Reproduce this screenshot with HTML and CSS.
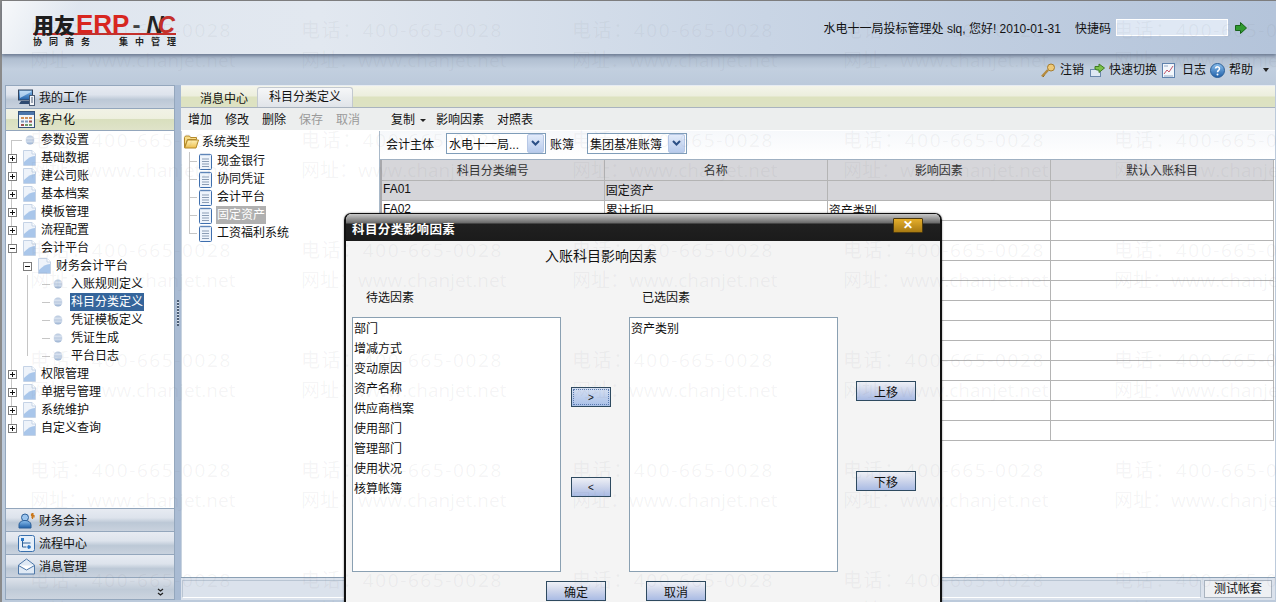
FILE: index.html
```html
<!DOCTYPE html>
<html lang="zh-CN">
<head>
  <meta charset="UTF-8">
  <title>用友ERP-NC</title>
  <link rel="stylesheet" href="styles.css">
</head>
<body>
  <!-- 图标 -->
  <svg class="sprite" xmlns="http://www.w3.org/2000/svg">
    <defs>
      <linearGradient id="g-ball" x1="0" y1="0" x2="0" y2="1"><stop offset="0" stop-color="#b4c5dd"/><stop offset=".5" stop-color="#e9eff7"/><stop offset="1" stop-color="#93acce"/></linearGradient>
      <linearGradient id="g-blue" x1="0" y1="0" x2="0" y2="1"><stop offset="0" stop-color="#8cc0ee"/><stop offset="1" stop-color="#1f5fa8"/></linearGradient>
      <linearGradient id="g-folder" x1="0" y1="0" x2="0" y2="1"><stop offset="0" stop-color="#fff3b8"/><stop offset="1" stop-color="#eebf4e"/></linearGradient>
    </defs>
    <symbol id="i-plus" viewBox="0 0 9 9"><rect x=".5" y=".5" width="8" height="8" fill="#fff" stroke="#7d7d7d"/><path d="M2 4.500h5M4.500 2v5" stroke="#111"/></symbol>
    <symbol id="i-minus" viewBox="0 0 9 9"><rect x=".5" y=".5" width="8" height="8" fill="#fff" stroke="#7d7d7d"/><path d="M2 4.500h5" stroke="#111"/></symbol>
    <symbol id="i-page" viewBox="0 0 13 16"><path d="M.5.500H9L12.500 4v11.500H.5z" fill="#eef3fa" stroke="#c5d3e6"/><path d="M1 15V12C5 8 8 6 12 6v9z" fill="#a9c6ea"/><path d="M9 .5V4h3.500" fill="#fff" stroke="#c5d3e6"/></symbol>
    <symbol id="i-ball" viewBox="0 0 10 10"><circle cx="5" cy="5" r="4.500" fill="url(#g-ball)"/><path d="M1 5h8" stroke="#7f9cc2" stroke-width=".6"/></symbol>
    <symbol id="i-folder" viewBox="0 0 15 14"><path d="M.5 12.500V2.500l1-1.500h4l1 1.500h6v2h-9z" fill="#f8dc87" stroke="#b58a2a"/><path d="M.7 13 3.500 5h11l-2.500 8z" fill="url(#g-folder)" stroke="#b58a2a"/></symbol>
    <symbol id="i-note" viewBox="0 0 13 17"><rect x=".5" y="1.500" width="12" height="15" rx="1" fill="#eef4fc" stroke="#3f6fae"/><path d="M1.500 1.500h10" stroke="#7f9cc2" stroke-width="2" stroke-dasharray="1 1"/><path d="M3 6h7M3 8.500h7M3 11h7M3 13.500h7" stroke="#8b9db5"/></symbol>
    <symbol id="i-monitor" viewBox="0 0 17 17"><rect x=".5" y="1" width="14" height="10" fill="url(#g-blue)" stroke="#33445e"/><path d="M2 9 13 3v-1H2z" fill="#d6e9fb" opacity=".7"/><path d="M3 12h9l2 3H1z" fill="#2e4a70"/><rect x="11.500" y="6.500" width="5" height="10" fill="#f4f6f9" stroke="#4c5d76"/><path d="M13 9h2M13 11h2M13 13h2" stroke="#4c5d76"/></symbol>
    <symbol id="i-grid" viewBox="0 0 17 17"><rect x=".5" y=".5" width="16" height="16" fill="#f3f5f8" stroke="#35537c"/><rect x="1" y="1" width="15" height="3" fill="#4b76ab"/><path d="M3 6h3v2H3zM7 6h3v2H7zM11 6h3v2h-3z" fill="#d1925a"/><path d="M3 9.500h3v2H3zM7 9.500h3v2H7z" fill="#7d97bc"/><path d="M11 9.500h3v2h-3zM3 13h3v2H3z" fill="#9e4f4f"/><path d="M7 13h3v2H7zM11 13h3v2h-3z" fill="#6d9c6a"/></symbol>
    <symbol id="i-person" viewBox="0 0 17 17"><circle cx="7" cy="5.500" r="3.500" fill="#9cc5ee" stroke="#2d6099"/><path d="M1 16v-3c0-3 3-4.500 6-4.500s6 1.500 6 4.500v3z" fill="url(#g-blue)" stroke="#2d6099"/><path d="M14.500 1v6M16 2h-2.500v1.500H16V5h-3" fill="none" stroke="#c9771b" stroke-width="1.200"/></symbol>
    <symbol id="i-flow" viewBox="0 0 17 17"><rect x=".5" y=".5" width="16" height="16" rx="2" fill="#e6eff9" stroke="#3a70ad"/><path d="M4.500 5v7h4M4.500 8h8" stroke="#2d6099" fill="none"/><rect x="3" y="3" width="3" height="3" fill="#2d77c4"/><path d="M10 10l3 2-3 2z" fill="#2d77c4"/><circle cx="11" cy="12" r="1.800" fill="#2d77c4"/></symbol>
    <symbol id="i-mail" viewBox="0 0 17 17"><path d="M.5 7 8.500 1l8 6v9H.500z" fill="#dfe9f5" stroke="#4d77a8"/><path d="M.5 7.500 8.500 12l8-4.500" fill="#fff" stroke="#4d77a8"/></symbol>
    <symbol id="i-key" viewBox="0 0 15 15"><path d="M1 13.500 7 7" stroke="#b48a3f" stroke-width="2.500"/><circle cx="10" cy="4.500" r="3.500" fill="#eec978" stroke="#a67c2e"/><path d="M2 14l1.500-1.500" stroke="#8a6a2a"/></symbol>
    <symbol id="i-switch" viewBox="0 0 15 15"><rect x=".5" y="6.500" width="10" height="7" fill="#dfe8f3" stroke="#6c88ab"/><path d="M5 6V3.500h4V1l5.500 4L9 9.500V7H7z" fill="#7cc04a" stroke="#3f7d22"/></symbol>
    <symbol id="i-chart" viewBox="0 0 13 15"><rect x=".5" y=".5" width="12" height="14" fill="#f3f7fc" stroke="#5f82ad"/><path d="M2 11l3-4 2 2 4-6" fill="none" stroke="#c2566b"/><path d="M2 13h9M2 3h4" stroke="#93a9c5"/></symbol>
    <symbol id="i-help" viewBox="0 0 15 15"><circle cx="7.500" cy="7.500" r="7" fill="url(#g-blue)" stroke="#2d6099"/><path d="M5.500 5.500a2 2 0 1 1 3 2c-.8.500-1 .800-1 1.800" fill="none" stroke="#fff" stroke-width="1.500"/><circle cx="7.500" cy="11.500" r="1" fill="#fff"/></symbol>
    <symbol id="i-go" viewBox="0 0 12 12"><path d="M.5 3.500h5V.5L11.500 6l-6 5.500v-3h-5z" fill="#2f9a2f" stroke="#156315"/></symbol>
    <symbol id="i-combo" viewBox="0 0 9 6"><path d="M1 1l3.500 3.500L8 1" fill="none" stroke="#2b4f86" stroke-width="2"/></symbol>
    <symbol id="i-more" viewBox="0 0 7 9"><path d="M1 1l2.500 2L6 1M1 5l2.500 2L6 5" fill="none" stroke="#222" stroke-width="1.300"/></symbol>
  </svg>

  <div class="page">
    <header class="top-bar">
      <div class="logo">
        <div class="logo-main"><b>用友</b><em>ERP</em><s>-</s><i>N</i><u>C</u></div>
        <div class="logo-sub"><span>协同商务</span><span>集中管理</span></div>
      </div>
      <div class="user-info">
        <span>水电十一局投标管理处 slq, 您好! 2010-01-31</span>
        <label class="quick-label">快捷码</label>
        <input class="quick-input" type="text">
        <svg class="go-icon"><use href="#i-go"/></svg>
      </div>
    </header>

    <nav class="sub-bar">
      <svg class="sub-icon"><use href="#i-key"/></svg><a class="first">注销</a>
      <svg class="sub-icon"><use href="#i-switch"/></svg><a>快速切换</a>
      <svg class="sub-icon chart"><use href="#i-chart"/></svg><a>日志</a>
      <svg class="sub-icon"><use href="#i-help"/></svg><a>帮助</a>
      <span class="caret"></span>
    </nav>

    <div class="workspace">
      <aside class="side-panel">
        <div class="acc-head"><svg><use href="#i-monitor"/></svg><span>我的工作</span></div>
        <div class="acc-head active"><svg><use href="#i-grid"/></svg><span>客户化</span></div>
        <div class="nav-tree">
          <ul class="tree root">
            <li class="row"><span class="tick wide"></span><svg class="ball"><use href="#i-ball"/></svg>参数设置</li>
            <li class="row"><svg class="exp"><use href="#i-plus"/></svg><svg class="page-ico"><use href="#i-page"/></svg>基础数据</li>
            <li class="row"><svg class="exp"><use href="#i-plus"/></svg><svg class="page-ico"><use href="#i-page"/></svg>建公司账</li>
            <li class="row"><svg class="exp"><use href="#i-plus"/></svg><svg class="page-ico"><use href="#i-page"/></svg>基本档案</li>
            <li class="row"><svg class="exp"><use href="#i-plus"/></svg><svg class="page-ico"><use href="#i-page"/></svg>模板管理</li>
            <li class="row"><svg class="exp"><use href="#i-plus"/></svg><svg class="page-ico"><use href="#i-page"/></svg>流程配置</li>
            <li class="row"><svg class="exp"><use href="#i-minus"/></svg><svg class="page-ico"><use href="#i-page"/></svg>会计平台</li>
            <li>
              <ul class="tree level2">
                <li class="row"><svg class="exp"><use href="#i-minus"/></svg><svg class="page-ico"><use href="#i-page"/></svg>财务会计平台</li>
                <li>
                  <ul class="tree level3">
                    <li class="row"><span class="tick"></span><svg class="ball"><use href="#i-ball"/></svg>入账规则定义</li>
                    <li class="row"><span class="tick"></span><svg class="ball"><use href="#i-ball"/></svg><span class="picked">科目分类定义</span></li>
                    <li class="row"><span class="tick"></span><svg class="ball"><use href="#i-ball"/></svg>凭证模板定义</li>
                    <li class="row"><span class="tick"></span><svg class="ball"><use href="#i-ball"/></svg>凭证生成</li>
                    <li class="row"><span class="tick"></span><svg class="ball"><use href="#i-ball"/></svg>平台日志</li>
                  </ul>
                </li>
              </ul>
            </li>
            <li class="row"><svg class="exp"><use href="#i-plus"/></svg><svg class="page-ico"><use href="#i-page"/></svg>权限管理</li>
            <li class="row"><svg class="exp"><use href="#i-plus"/></svg><svg class="page-ico"><use href="#i-page"/></svg>单据号管理</li>
            <li class="row"><svg class="exp"><use href="#i-plus"/></svg><svg class="page-ico"><use href="#i-page"/></svg>系统维护</li>
            <li class="row"><svg class="exp"><use href="#i-plus"/></svg><svg class="page-ico"><use href="#i-page"/></svg>自定义查询</li>
          </ul>
        </div>
        <div class="acc-head"><svg><use href="#i-person"/></svg><span>财务会计</span></div>
        <div class="acc-head"><svg><use href="#i-flow"/></svg><span>流程中心</span></div>
        <div class="acc-head"><svg><use href="#i-mail"/></svg><span>消息管理</span></div>
        <div class="acc-foot"><svg><use href="#i-more"/></svg></div>
      </aside>

      <div class="splitter"><span></span></div>

      <main class="main-panel">
        <div class="tab-strip">
          <span class="tab">消息中心</span>
          <span class="tab current">科目分类定义</span>
        </div>
        <div class="toolbar">
          <a>增加</a><a>修改</a><a>删除</a><a class="off">保存</a><a class="off">取消</a>
          <a class="copy">复制<span class="caret small"></span></a><a class="after-copy">影响因素</a><a>对照表</a>
        </div>
        <div class="content">
          <div class="type-tree">
            <div class="type-root"><svg class="folder"><use href="#i-folder"/></svg>系统类型</div>
            <ul class="type-list">
              <li><span class="tick"></span><svg class="note"><use href="#i-note"/></svg>现金银行</li>
              <li><span class="tick"></span><svg class="note"><use href="#i-note"/></svg>协同凭证</li>
              <li><span class="tick"></span><svg class="note"><use href="#i-note"/></svg>会计平台</li>
              <li><span class="tick"></span><svg class="note"><use href="#i-note"/></svg><span class="grey-pick">固定资产</span></li>
              <li><span class="tick"></span><svg class="note"><use href="#i-note"/></svg>工资福利系统</li>
            </ul>
          </div>
          <div class="grid-area">
            <div class="filter">
              <span class="filter-label">会计主体</span>
              <div class="combo"><span>水电十一局...</span><b><svg><use href="#i-combo"/></svg></b></div>
              <span class="filter-label second">账簿</span>
              <div class="combo"><span>集团基准账簿</span><b><svg><use href="#i-combo"/></svg></b></div>
            </div>
            <table class="grid">
              <thead>
                <tr><th>科目分类编号</th><th>名称</th><th>影响因素</th><th>默认入账科目</th></tr>
              </thead>
              <tbody>
                <tr class="sel"><td>FA01</td><td>固定资产</td><td></td><td></td></tr>
                <tr><td>FA02</td><td>累计折旧</td><td>资产类别</td><td></td></tr>
                <tr><td></td><td></td><td></td><td></td></tr>
                <tr><td></td><td></td><td></td><td></td></tr>
                <tr><td></td><td></td><td></td><td></td></tr>
                <tr><td></td><td></td><td></td><td></td></tr>
                <tr><td></td><td></td><td></td><td></td></tr>
                <tr><td></td><td></td><td></td><td></td></tr>
                <tr><td></td><td></td><td></td><td></td></tr>
                <tr><td></td><td></td><td></td><td></td></tr>
                <tr><td></td><td></td><td></td><td></td></tr>
                <tr><td></td><td></td><td></td><td></td></tr>
                <tr><td></td><td></td><td></td><td></td></tr>
              </tbody>
            </table>
          </div>
        </div>
        <div class="status-bar">
          <div class="status-blank"></div>
          <div class="status-box">测试帐套</div>
        </div>
      </main>
    </div>
  </div>

  <!-- 弹出窗口 -->
  <section class="dialog">
    <div class="dialog-title">
      <span>科目分类影响因素</span>
      <button class="close-btn" type="button">✕</button>
    </div>
    <div class="dialog-body">
      <h2 class="dialog-heading">入账科目影响因素</h2>
      <div class="pick-labels"><span>待选因素</span><span>已选因素</span></div>
      <div class="pick-area">
        <ul class="pick-list">
          <li>部门</li><li>增减方式</li><li>变动原因</li><li>资产名称</li><li>供应商档案</li>
          <li>使用部门</li><li>管理部门</li><li>使用状况</li><li>核算帐簿</li>
        </ul>
        <div class="move-col">
          <button class="btn arrow focus" type="button">&gt;</button>
          <button class="btn arrow" type="button">&lt;</button>
        </div>
        <ul class="pick-list">
          <li>资产类别</li>
        </ul>
        <div class="order-col">
          <button class="btn" type="button">上移</button>
          <button class="btn" type="button">下移</button>
        </div>
      </div>
      <div class="dialog-foot">
        <button class="btn" type="button">确定</button>
        <button class="btn" type="button">取消</button>
      </div>
    </div>
  </section>

  <div class="watermark" id="watermark"></div>
  <script src="watermark.js"></script>
</body>
</html>
```

FILE: styles.css
```css
/* 基础 */
html, body {
  margin: 0;
  padding: 0;
  height: 602px;
  overflow: hidden;
}
body {
  position: relative;
  font-family: "Liberation Sans", "Noto Sans CJK SC", sans-serif;
  font-size: 12px;
  color: #111;
  background-color: #bccadb;
}
ul {
  list-style: none;
  margin: 0;
  padding: 0;
}
.sprite {
  display: block;
  width: 0;
  height: 0;
}
.page {
  display: flex;
  flex-direction: column;
  height: 602px;
  border-top: 1px solid #7f7f7f;
  border-left: 2px solid #8a8a8a;
  box-sizing: border-box;
}

/* 顶部 */
.top-bar {
  flex: 0 0 53px;
  display: flex;
  justify-content: space-between;
  background:
    linear-gradient(118deg, rgba(255, 255, 255, 0.75) 0, rgba(255, 255, 255, 0) 70px),
    linear-gradient(90deg, #dfe6ef 0, #e2e8f0 25%, #c9d5e5 60%, #b4c4da 100%);
  box-shadow: 0 2px 3px rgba(70, 85, 110, 0.6);
  position: relative;
}
.logo {
  margin: 8px 0 0 31px;
  width: 143px;
}
.logo-main {
  display: flex;
  align-items: baseline;
  height: 24px;
  line-height: 24px;
  border-bottom: 2px solid #c4302b;
  white-space: nowrap;
}
.logo-main b {
  font-size: 21px;
  font-weight: 900;
  color: #1d1d1d;
}
.logo-main em {
  font: bold 26px "Liberation Sans", sans-serif;
  color: #d8261f;
  margin-left: 1px;
}
.logo-main s {
  text-decoration: none;
  font: bold 24px "Liberation Sans", sans-serif;
  color: #444;
  margin: 0 6px 0 3px;
}
.logo-main i {
  font: italic bold 24px "Liberation Sans", sans-serif;
  color: #222;
}
.logo-main u {
  text-decoration: none;
  font: italic bold 24px "Liberation Sans", sans-serif;
  color: #c4302b;
  margin-left: -6px;
}
.logo-sub {
  display: flex;
  justify-content: space-between;
  margin-top: 2px;
  font-size: 9px;
  line-height: 11px;
  font-weight: bold;
  letter-spacing: 7px;
  color: #222;
  white-space: nowrap;
}
.logo-sub span:last-child {
  margin-right: -7px;
}
.user-info {
  display: flex;
  align-items: center;
  height: 17px;
  margin: 18px 29px 0 0;
  white-space: nowrap;
}
.quick-label {
  margin-left: 14px;
}
.quick-input {
  width: 112px;
  height: 17px;
  margin: 0 0 0 5px;
  padding: 0;
  box-sizing: border-box;
  border: 1px solid #fff;
  background-color: #dfe8f4;
}
.go-icon {
  width: 12px;
  height: 12px;
  margin-left: 7px;
}
.sub-bar {
  flex: 0 0 30px;
  display: flex;
  align-items: center;
  justify-content: flex-end;
  padding: 2px 7px 0 0;
  box-sizing: border-box;
  background: linear-gradient(#a8b7ca, #c2cfdf 50%, #bccadb);
}
.sub-bar a {
  margin-right: 4px;
  line-height: 16px;
}
.sub-bar a.first {
  margin-right: 6px;
}
.sub-icon {
  width: 15px;
  height: 15px;
  margin-right: 4px;
}
.sub-icon.chart {
  width: 13px;
  margin: 0 7px 0 1px;
}
.caret {
  display: inline-block;
  width: 0;
  height: 0;
  margin-left: 6px;
  border-style: solid;
  border-width: 4px 3.5px 0;
  border-color: #222 transparent transparent;
}
.caret.small {
  margin-left: 5px;
  vertical-align: middle;
  border-width: 3px 3px 0;
}

/* 工作区 */
.workspace {
  flex: 1;
  min-height: 0;
  display: flex;
  padding: 1px 0 2px 3px;
}
.side-panel {
  flex: 0 0 170px;
  display: flex;
  flex-direction: column;
  box-sizing: border-box;
  border: 1px solid #94a7bd;
  background-color: #fff;
}
.acc-head {
  flex: 0 0 23px;
  box-sizing: border-box;
  display: flex;
  align-items: center;
  padding-left: 12px;
  border-bottom: 1px solid #93a6bc;
  background: linear-gradient(#e7ebf2, #dde3ec 40%, #bcc8d6 62%, #c9d2de);
}
.acc-head span {
  margin-bottom: 2px;
}
.acc-head svg {
  width: 17px;
  height: 17px;
  margin-right: 4px;
}
.acc-head.active {
  flex-basis: 22px;
  background: linear-gradient(#f1f2e6 0, #eef0df 45%, #d9dfbe 50%, #dfe3c9);
}
.acc-head.active span {
  margin-bottom: 3px;
}
.nav-tree {
  flex: 1;
  border-bottom: 1px solid #93a6bc;
}
.acc-foot {
  flex: 0 0 21px;
  display: flex;
  align-items: flex-end;
  justify-content: flex-end;
  padding: 0 10px 2px 0;
  background: linear-gradient(#dde2ea, #c0cbd8 55%, #ccd4df);
  box-sizing: border-box;
}
.acc-foot svg {
  width: 7px;
  height: 9px;
}

/* 树 */
.tree.root {
  padding-left: 2px;
  background: linear-gradient(#c6c6c6, #c6c6c6) 5px 9px / 1px calc(100% - 18px) no-repeat;
}
.tree.level2 {
  padding-left: 15px;
}
.tree.level3 {
  padding-left: 15px;
  background: linear-gradient(#c6c6c6, #c6c6c6) 4px 0 / 1px calc(100% - 9px) no-repeat;
}
.row {
  display: flex;
  align-items: center;
  height: 18px;
  line-height: 18px;
  white-space: nowrap;
}
.exp {
  flex: none;
  width: 9px;
  height: 9px;
  margin-right: 6px;
}
.page-ico {
  flex: none;
  width: 13px;
  height: 16px;
  margin-right: 5px;
}
.tick {
  flex: none;
  width: 8px;
  height: 1px;
  margin: 0 3px 0 4px;
  background-color: #c6c6c6;
}
.tick.wide {
  width: 10px;
}
.ball {
  flex: none;
  width: 10px;
  height: 10px;
  margin-right: 6px;
}
.level3 .ball {
  margin-right: 8px;
}
.picked {
  background-color: #35659b;
  color: #fff;
  line-height: 18px;
  margin-left: -1px;
  padding: 0 1px;
}

/* 拆分条 */
.splitter {
  flex: 0 0 6px;
  display: flex;
  align-items: center;
  justify-content: center;
  background-color: #a9bbd3;
}
.splitter span {
  width: 2px;
  height: 26px;
  margin-bottom: 60px;
  background: repeating-linear-gradient(#4d5f76 0 2px, #dfe6ee 2px 3px);
}

/* 主面板 */
.main-panel {
  flex: 1;
  min-width: 0;
  display: flex;
  flex-direction: column;
  margin-right: 1px;
  background-color: #fff;
  border-top: 1px solid #e7ecf2;
}
.tab-strip {
  flex: 0 0 22px;
  box-sizing: border-box;
  display: flex;
  align-items: flex-end;
  padding-left: 10px;
  border-bottom: 1px solid #a9b3bf;
  background: linear-gradient(#f4f5ea 0, #eceedd 48%, #dde2bf 52%, #dde2c3);
}
.tab {
  width: 66px;
  height: 16px;
  line-height: 16px;
  text-align: center;
}
.tab.current {
  width: 96px;
  height: 20px;
  line-height: 19px;
  box-sizing: border-box;
  border: 1px solid #c3c9d0;
  border-bottom: 0;
  border-radius: 3px 3px 0 0;
  background: linear-gradient(#f6f7f8, #e0e4e9);
}
.toolbar {
  flex: 0 0 23px;
  box-sizing: border-box;
  display: flex;
  align-items: center;
  padding: 0 0 2px 7px;
  gap: 13px;
  background-color: #eceeee;
  border-bottom: 1px solid #fff;
}
.toolbar .off {
  color: #9a9a9a;
}
.toolbar .copy {
  margin-left: 18px;
}
.toolbar .after-copy {
  margin-left: -3px;
}
.content {
  flex: 1;
  min-height: 0;
  display: flex;
}
.type-tree {
  flex: 0 0 199px;
  box-sizing: border-box;
  border-right: 1px solid #a9b9c9;
  border-left: 1px solid #c8d3df;
  padding: 2px 0 0 2px;
}
.type-root {
  display: flex;
  align-items: center;
  height: 18px;
  line-height: 18px;
  margin-bottom: 1px;
}
.folder {
  width: 15px;
  height: 14px;
  margin-right: 3px;
}
.type-list {
  background: linear-gradient(#c6c6c6, #c6c6c6) 5px 0 / 1px 81px no-repeat;
}
.type-list li {
  display: flex;
  align-items: center;
  height: 18px;
  line-height: 18px;
}
.type-list .tick {
  margin: 0 2px 0 5px;
}
.note {
  flex: none;
  width: 13px;
  height: 17px;
  margin-right: 5px;
}
.grey-pick {
  background-color: #b0b0b0;
  color: #fff;
  line-height: 18px;
  margin-left: -1px;
  padding: 0 1px;
}
.grid-area {
  flex: 1;
  min-width: 0;
}
.filter {
  height: 29px;
  box-sizing: border-box;
  display: flex;
  align-items: center;
  padding: 0 0 4px 6px;
  background: linear-gradient(#f6f8fb, #fff);
  border-bottom: 1px solid #9fb0c2;
}
.filter-label {
  width: 60px;
}
.filter-label.second {
  width: 37px;
  margin-left: 4px;
}
.combo {
  width: 100px;
  height: 21px;
  box-sizing: border-box;
  display: flex;
  align-items: center;
  justify-content: space-between;
  border: 1px solid #7f9db9;
  background-color: #fff;
  padding: 1px 1px 1px 2px;
  white-space: nowrap;
}
.combo b {
  width: 15px;
  height: 17px;
  display: flex;
  align-items: center;
  justify-content: center;
  border: 1px solid #b7c8e6;
  border-radius: 2px;
  background: linear-gradient(#e2ebfa, #b8cbec);
}
.combo svg {
  width: 9px;
  height: 6px;
}
.grid {
  width: 894px;
  table-layout: fixed;
  border-collapse: collapse;
  border-left: 2px solid #a8a8ac;
}
.grid th,
.grid td {
  height: 20px;
  padding: 0 1px 2px;
  box-sizing: border-box;
  border-right: 1px solid #b4b4b4;
  border-bottom: 1px solid #b4b4b4;
  font-weight: normal;
  white-space: nowrap;
  overflow: hidden;
}
.grid th {
  padding-bottom: 0;
  background-color: #d6d6da;
  color: #333;
}
.grid .sel td {
  background-color: #d5d5d9;
}
.status-bar {
  flex: 0 0 22px;
  box-sizing: border-box;
  display: flex;
  gap: 3px;
  padding: 2px 3px 2px 1px;
  border-top: 1px solid #8ba0b4;
  background-color: #dbe2ec;
}
.status-blank {
  flex: 1;
  border: 1px solid #b9c5d3;
  border-bottom-color: #fff;
}
.status-box {
  width: 68px;
  box-sizing: border-box;
  text-align: center;
  line-height: 16px;
  border: 1px solid #a9b3bf;
  background-color: #eef0f3;
}

/* 弹窗盖在页面之上 */
.dialog {
  position: absolute;
  left: 344px;
  top: 213px;
  width: 598px;
  height: 400px;
  display: flex;
  flex-direction: column;
  box-sizing: border-box;
  border: 2px solid #111;
  border-top-width: 1px;
  border-bottom: 0;
  border-radius: 7px 7px 0 0;
  box-shadow: 0 0 2px rgba(0, 0, 0, 0.5);
  overflow: hidden;
}
.dialog-title {
  flex: 0 0 27px;
  display: flex;
  justify-content: space-between;
  align-items: flex-start;
  box-sizing: border-box;
  padding: 4px 17px 0 6px;
  background: linear-gradient(#c9c9c9 0, #6d6d6d 32%, #202020 38%, #1b1b1b 100%);
}
.dialog-title span {
  margin-top: 3px;
  font-size: 12.500px;
  font-weight: bold;
  line-height: 18px;
  color: #fff;
  letter-spacing: 0.400px;
}
.close-btn {
  width: 30px;
  height: 15px;
  padding: 0;
  border: 1px solid #4d3a10;
  border-radius: 1px;
  font-size: 12px;
  line-height: 13px;
  font-weight: bold;
  color: #fff;
  background: linear-gradient(#e5ae2b, #a87a12);
}
.dialog-body {
  flex: 1;
  background-color: #f4f4f4;
}
.dialog-heading {
  margin: 5px 0 0 199px;
  font-size: 14px;
  font-weight: normal;
  line-height: 20px;
}
.pick-labels {
  display: flex;
  margin: 23px 0 0 20px;
  line-height: 18px;
}
.pick-labels span {
  width: 276px;
}
.pick-area {
  display: flex;
  margin: 10px 0 0 6px;
  height: 255px;
}
.pick-list {
  width: 209px;
  box-sizing: border-box;
  border: 1px solid #8aa0b2;
  background-color: #fff;
  padding: 1px 0 0 1px;
}
.pick-list li {
  height: 20px;
  line-height: 20px;
}
.move-col {
  flex: 0 0 68px;
  box-sizing: border-box;
  padding: 70px 0 0 10px;
  display: flex;
  flex-direction: column;
  gap: 70px;
}
.order-col {
  box-sizing: border-box;
  padding: 64px 0 0 18px;
  display: flex;
  flex-direction: column;
  gap: 70px;
}
.btn {
  width: 60px;
  height: 20px;
  padding: 0;
  font: 12px "Liberation Sans", "Noto Sans CJK SC", sans-serif;
  color: #111;
  border: 1px solid #2e4a60;
  background: linear-gradient(#eef0f6, #c9d2ea 55%, #a9bbe4);
}
.btn.arrow {
  width: 40px;
  font-size: 10px;
}
.btn.focus {
  background: linear-gradient(#d6e0f2, #a9c0e8);
  outline: 1px dotted #5a7bb0;
  outline-offset: -3px;
}
.dialog-foot {
  display: flex;
  margin: 9px 0 0 200px;
  gap: 40px;
}

/* 水印 */
.watermark {
  position: absolute;
  inset: 0;
  overflow: hidden;
  pointer-events: none;
  display: grid;
  grid-template-columns: repeat(5, 271px);
  grid-auto-rows: 110px;
  padding: 19px 0 0 30px;
  font-family: "Open Sans", "Noto Sans CJK SC", sans-serif;
  font-size: 19px;
  color: rgba(110, 110, 120, 0.07);
  white-space: nowrap;
}
.wm-line {
  height: 30px;
  line-height: 22px;
}
.wm-phone {
  letter-spacing: 1.600px;
}
```

FILE: watermark.js
```js
// 铺满水印
const box = document.getElementById('watermark');
for (let i = 0; i < 30; i++) {
  const tile = document.createElement('div');
  tile.innerHTML = '<div class="wm-line wm-phone">电话：400-665-0028</div>' +
    '<div class="wm-line wm-site">网址：www.chanjet.net</div>';
  box.appendChild(tile);
}
```
